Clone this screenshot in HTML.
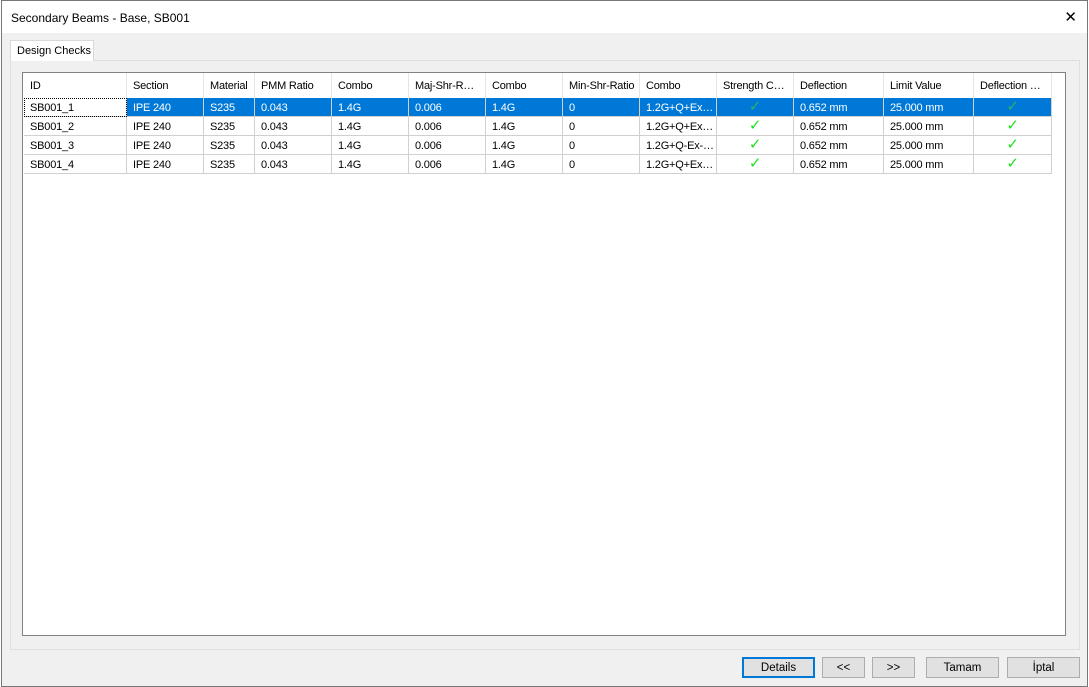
<!DOCTYPE html><html><head><style>
*{box-sizing:border-box;margin:0;padding:0}
body{width:1089px;height:687px;background:#fff;font-family:"Liberation Sans",sans-serif;font-size:11px;color:#000;position:relative;overflow:hidden}
.win{position:absolute;left:1px;top:0;width:1087px;height:687px;border:1px solid #777;background:#f0f0f0}
.title{position:absolute;left:0;top:0;width:1085px;height:32px;background:#fff;font-size:12px;padding:10px 0 0 9px}
.x{position:absolute;right:10px;top:7px;font-size:15px;font-weight:300}
.tab{position:absolute;left:8px;top:39px;width:84px;height:21px;background:#fff;border:1px solid #d9d9d9;border-bottom:none;padding:4px 0 0 6px;z-index:2}
.panel{position:absolute;left:8px;top:59px;width:1070px;height:590px;border:1px solid #e0e0e0;background:#f0f0f0}
.grid{position:absolute;left:22px;top:72px;width:1044px;height:564px;border:1px solid #828282;background:#fff}
.c{position:absolute;height:19px;padding:4px 0 0 6px;border-right:1px solid #d0d0d0;border-bottom:1px solid #d0d0d0;white-space:nowrap;overflow:hidden;letter-spacing:-0.2px}
.h{height:25px;padding-top:7px;border-right:1px solid #e5e5e5;border-bottom:none}
.s{background:#0078d7;color:#fff}
.ck{color:#1ee01e;text-align:center;padding:1px 0 0 0;font-size:15px;line-height:16px}
.s.ck{color:#2bb06a}
.b{position:absolute;top:657px;height:21px;background:#e1e1e1;border:1px solid #adadad;text-align:center;padding-top:4px;font-size:11.5px}
</style></head><body>
<div class="win">
<div class="title">Secondary Beams - Base, SB001<span class="x">✕</span></div>
<div class="tab">Design Checks</div>
<div class="panel"></div>
</div>
<div class="grid"></div>
<div id="g"></div>
<div class="b" style="left:742px;width:73px;border:2px solid #0078d7;padding-top:3px">Details</div>
<div class="b" style="left:822px;width:43px">&lt;&lt;</div>
<div class="b" style="left:872px;width:43px">&gt;&gt;</div>
<div class="b" style="left:926px;width:73px">Tamam</div>
<div class="b" style="left:1007px;width:73px">İptal</div>
<script>
var xs=[24,127,204,255,332,409,486,563,640,717,794,884,974,1052];
var hd=["ID","Section","Material","PMM Ratio","Combo","Maj-Shr-R…","Combo","Min-Shr-Ratio","Combo","Strength C…","Deflection","Limit Value","Deflection …"];
var combos=["1.2G+Q+Ex…","1.2G+Q+Ex…","1.2G+Q-Ex-…","1.2G+Q+Ex…"];
var h="";
for(var i=0;i<13;i++)h+='<div class="c h" style="left:'+xs[i]+'px;top:73px;width:'+(xs[i+1]-xs[i])+'px">'+hd[i]+'</div>';
for(var r=0;r<4;r++){var y=98+r*19;var d=["SB001_"+(r+1),"IPE 240","S235","0.043","1.4G","0.006","1.4G","0",combos[r],"✓","0.652 mm","25.000 mm","✓"];
for(var i=0;i<13;i++){var cl="c";if(r==0&&i>0)cl+=" s";if(i==9||i==12)cl+=" ck";
var st=(r==0&&i==0)?"outline:1px dotted #000;outline-offset:-1px;":"";
h+='<div class="'+cl+'" style="'+st+'left:'+xs[i]+'px;top:'+y+'px;width:'+(xs[i+1]-xs[i])+'px">'+d[i]+'</div>';}}
document.getElementById("g").innerHTML=h;
</script>
</body></html>
